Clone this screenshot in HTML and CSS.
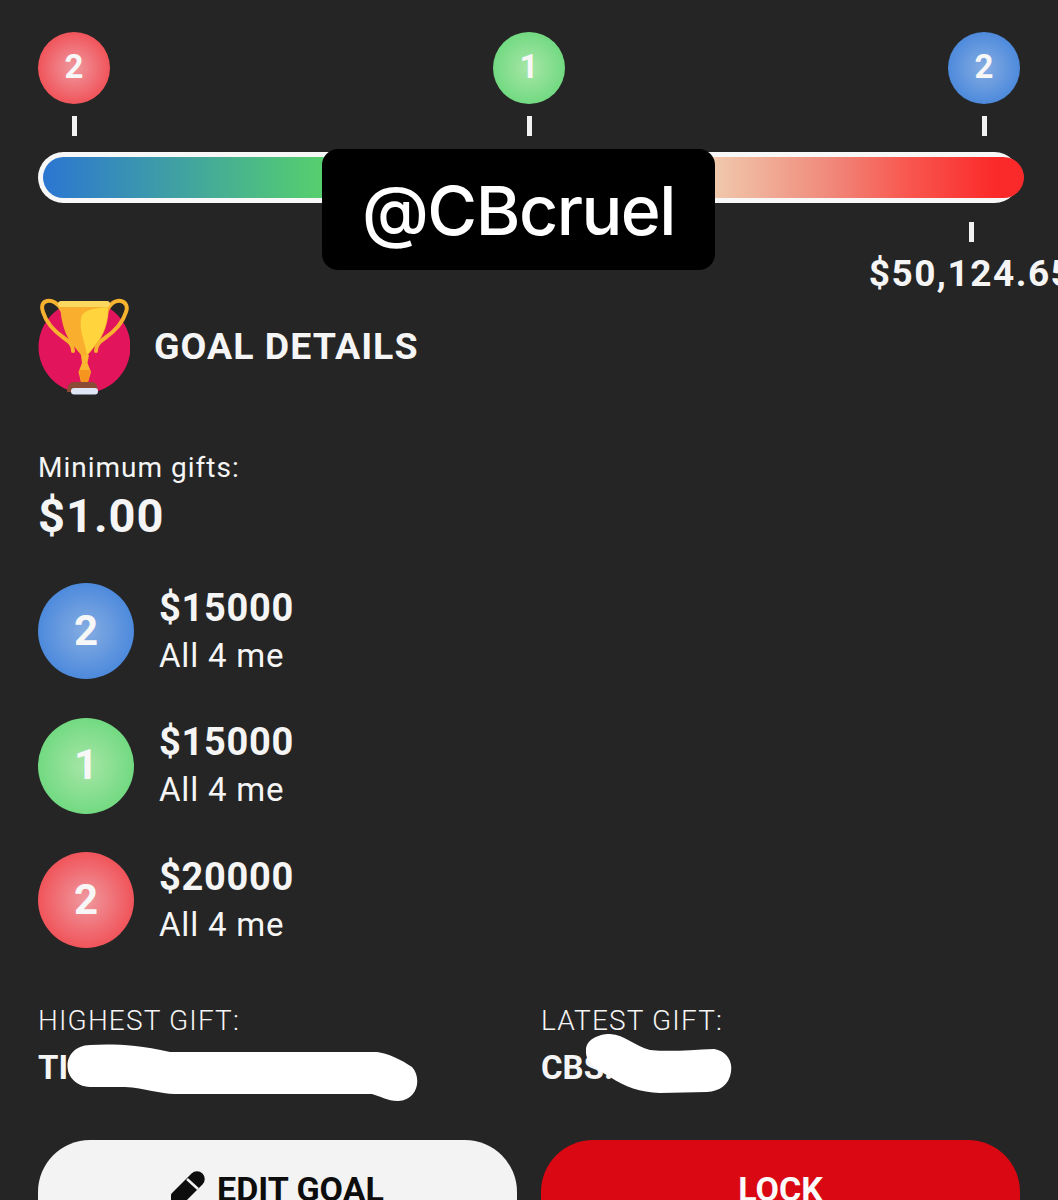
FILE: index.html
```html
<!DOCTYPE html>
<html lang="en">
<head>
<meta charset="utf-8">
<title>Goal details</title>
<link rel="stylesheet" href="styles.css">
</head>
<body>
<main class="page">
  <section class="progress">
    <div class="markers">
      <div class="marker"><span class="bubble small red">2</span><i class="tick"></i></div>
      <div class="marker"><span class="bubble small green">1</span><i class="tick"></i></div>
      <div class="marker"><span class="bubble small blue">2</span><i class="tick"></i></div>
    </div>
    <div class="track"><div class="fill"></div></div>
    <div class="amount"><i class="tick"></i><span class="amount-text">$50,124.65</span></div>
  </section>

  <header class="goal-head">
    <svg class="trophy" viewBox="0 0 92 98" aria-hidden="true">
      <circle cx="46.5" cy="49" r="46" fill="#e2145c"/>
      <path d="M24 12C20 5 14 2 9 3C4 4 3 9 5 14C8 24 16 33 26 40C32 44 35 47 35 53" fill="none" stroke="#f7b32f" stroke-width="4" stroke-linecap="round"/>
      <path d="M69 12C73 5 78 2 83 3C88 4 90 9 88 14C85 24 77 33 67 40C61 44 58 47 58 53" fill="none" stroke="#f7b32f" stroke-width="4" stroke-linecap="round"/>
      <path d="M22 7H71C71 24 66 38 58 47C55 51 52 54 50 57H43C41 54 38 51 35 47C27 38 23 24 22 7Z" fill="#f9ae2d"/>
      <path d="M43 20C44 13 54 10 70 9C70 24 65 38 57 47C54 51 51 54 49 57C47 44 41 33 43 20Z" fill="#ffd43c"/>
      <rect x="20" y="3" width="52" height="6" rx="3" fill="#fdd860"/>
      <path d="M43 57H51L49.5 65L53 74L50 84H43L40.5 74L44 65Z" fill="#fbb730"/>
      <path d="M41 72H52.5L50 84H43Z" fill="#f5951f"/>
      <path d="M29 94C29 87 32 84 37 84H54C58 84 60 88 60 94Z" fill="#8a4a35"/>
      <rect x="33" y="90" width="27" height="6.5" rx="3" fill="#dfe6f6"/>
    </svg>
    <h1 class="goal-title">GOAL DETAILS</h1>
  </header>

  <section class="minimum">
    <div class="min-label">Minimum gifts:</div>
    <div class="min-value">$1.00</div>
  </section>

  <ul class="tiers">
    <li class="tier"><span class="bubble large blue">2</span><div><div class="tier-price">$15000</div><div class="tier-note">All 4 me</div></div></li>
    <li class="tier"><span class="bubble large green">1</span><div><div class="tier-price">$15000</div><div class="tier-note">All 4 me</div></div></li>
    <li class="tier"><span class="bubble large red">2</span><div><div class="tier-price">$20000</div><div class="tier-note">All 4 me</div></div></li>
  </ul>

  <section class="gifts">
    <div><div class="gift-label">HIGHEST GIFT:</div><div class="gift-name">TI</div></div>
    <div><div class="gift-label">LATEST GIFT:</div><div class="gift-name">CBS.</div></div>
  </section>

  <section class="actions">
    <button class="btn btn-edit" type="button">
      <svg class="pencil" viewBox="0 0 38 38" aria-hidden="true">
        <path d="M26 12L7 31" fill="none" stroke="#0d0d0d" stroke-width="15.5" stroke-linecap="round"/>
        <path d="M16 12L27 22" fill="none" stroke="#f3f3f3" stroke-width="2.5"/>
      </svg>
      EDIT GOAL
    </button>
    <button class="btn btn-lock" type="button">LOCK</button>
  </section>
</main>

<div class="watermark">@CBcruel</div>
<svg class="scribbles" viewBox="0 0 1058 1200" aria-hidden="true">
  <path d="M90 1045C110 1044 135 1044 170 1052L377 1052C387 1053 402 1060 412 1067C422 1078 418 1100 398 1101C387 1101 380 1096 372 1094L175 1094C160 1094 145 1088 125 1087L90 1087C60 1085 60 1046 90 1045Z"/>
  <path d="M586 1050C586 1040 598 1034 610 1034C625 1035 635 1046 650 1050C670 1052 690 1050 714 1049C727 1051 733 1062 731 1072C729 1085 720 1091 707 1092L660 1093C640 1092 625 1087 610 1077C595 1068 585 1062 586 1050Z"/>
</svg>
</body>
</html>
```

FILE: styles.css
```css
* { box-sizing: border-box; }
html, body { margin: 0; height: 1200px; overflow: hidden; background: #252525; }
body { position: relative; font-family: Roboto, "Liberation Sans", sans-serif; color: #f5f5f5; }
.page { padding: 32px 38px 0; }

.markers { display: flex; justify-content: space-between; }
.marker { display: flex; flex-direction: column; align-items: center; width: 72px; }
.tick { display: block; width: 5px; height: 20px; background: #f2f2f2; margin-top: 12px; }

.bubble { display: flex; align-items: center; justify-content: center; border-radius: 50%; color: #f7f7f7; font-weight: 700; flex: none; }
.bubble.small { width: 72px; height: 72px; font-size: 33px; padding-bottom: 4px; }
.bubble.large { width: 96px; height: 96px; font-size: 42px; padding-bottom: 2px; }
.red { background: radial-gradient(circle, #ef9aa0 0%, #f0555b 70%, #ee4a50 100%); }
.green { background: radial-gradient(circle, #a8e6a8 0%, #6fd97f 75%, #60d472 100%); }
.blue { background: radial-gradient(circle, #86ade2 0%, #4a88dc 75%, #3f80d8 100%); }

.track { width: 982px; height: 51px; margin-top: 16px; padding: 5px; border-radius: 26px; background: #f7f7f7; }
.fill { height: 41px; margin-right: -9px; border-radius: 21px; background: linear-gradient(90deg, #2b76d2 0%, #3f9fa5 13%, #55ce6f 28%, #f0cbae 68%, #f08a7c 80%, #f85850 88%, #fb2a2a 97%); }

.amount { display: flex; flex-direction: column; align-items: center; width: 202px; margin-left: 832px; white-space: nowrap; }
.amount .tick { margin-top: 19px; }
.amount-text { font-size: 37px; line-height: 44px; font-weight: 700; letter-spacing: 1.5px; margin-top: 10px; }

.goal-head { display: flex; align-items: center; gap: 24px; margin-top: 2px; }
.trophy { width: 92px; height: 98px; flex: none; }
.goal-title { margin: 0 0 2px; font-size: 37.5px; line-height: 44px; font-weight: 700; letter-spacing: 1px; }

.minimum { margin-top: 54px; }
.min-label { font-size: 28px; line-height: 36px; letter-spacing: 1px; }
.min-value { font-size: 47px; line-height: 56px; font-weight: 700; letter-spacing: 1px; margin-top: 2px; }

.tiers { list-style: none; margin: 39px 0 0; padding: 0; display: flex; flex-direction: column; gap: 38.7px; }
.tier { display: flex; align-items: center; gap: 25px; }
.tier-price { font-size: 38px; line-height: 48px; font-weight: 700; letter-spacing: 0.7px; }
.tier-note { font-size: 33px; line-height: 46px; letter-spacing: 0.8px; margin-top: 1px; }

.gifts { display: grid; grid-template-columns: 479px 479px; column-gap: 24px; margin-top: 54.6px; }
.gift-label { font-size: 28px; line-height: 36px; font-weight: 300; letter-spacing: 1.15px; }
.gift-name { font-size: 33px; line-height: 40px; font-weight: 700; margin-top: 9px; }

.actions { display: grid; grid-template-columns: 479px 479px; column-gap: 24px; margin-top: 52px; }
.btn { display: flex; align-items: flex-start; justify-content: center; gap: 8px; height: 120px; padding-top: 27px; border: 0; border-radius: 52px; font-family: inherit; font-size: 34px; line-height: 44px; font-weight: 700; }
.btn-edit { background: #f3f3f3; color: #0d0d0d; }
.btn-lock { background: #da0812; color: #fbfbfb; }
.pencil { width: 38px; height: 38px; flex: none; }

.watermark { position: absolute; left: 322px; top: 149px; width: 393px; height: 121px; display: flex; align-items: center; justify-content: center; border-radius: 16px; background: #000; color: #fff; font-family: Inter, "Liberation Sans", Arial, sans-serif; font-weight: 500; font-size: 68px; letter-spacing: -1.5px; }
.scribbles { position: absolute; left: 0; top: 0; width: 1058px; height: 1200px; fill: #fff; pointer-events: none; }
```
